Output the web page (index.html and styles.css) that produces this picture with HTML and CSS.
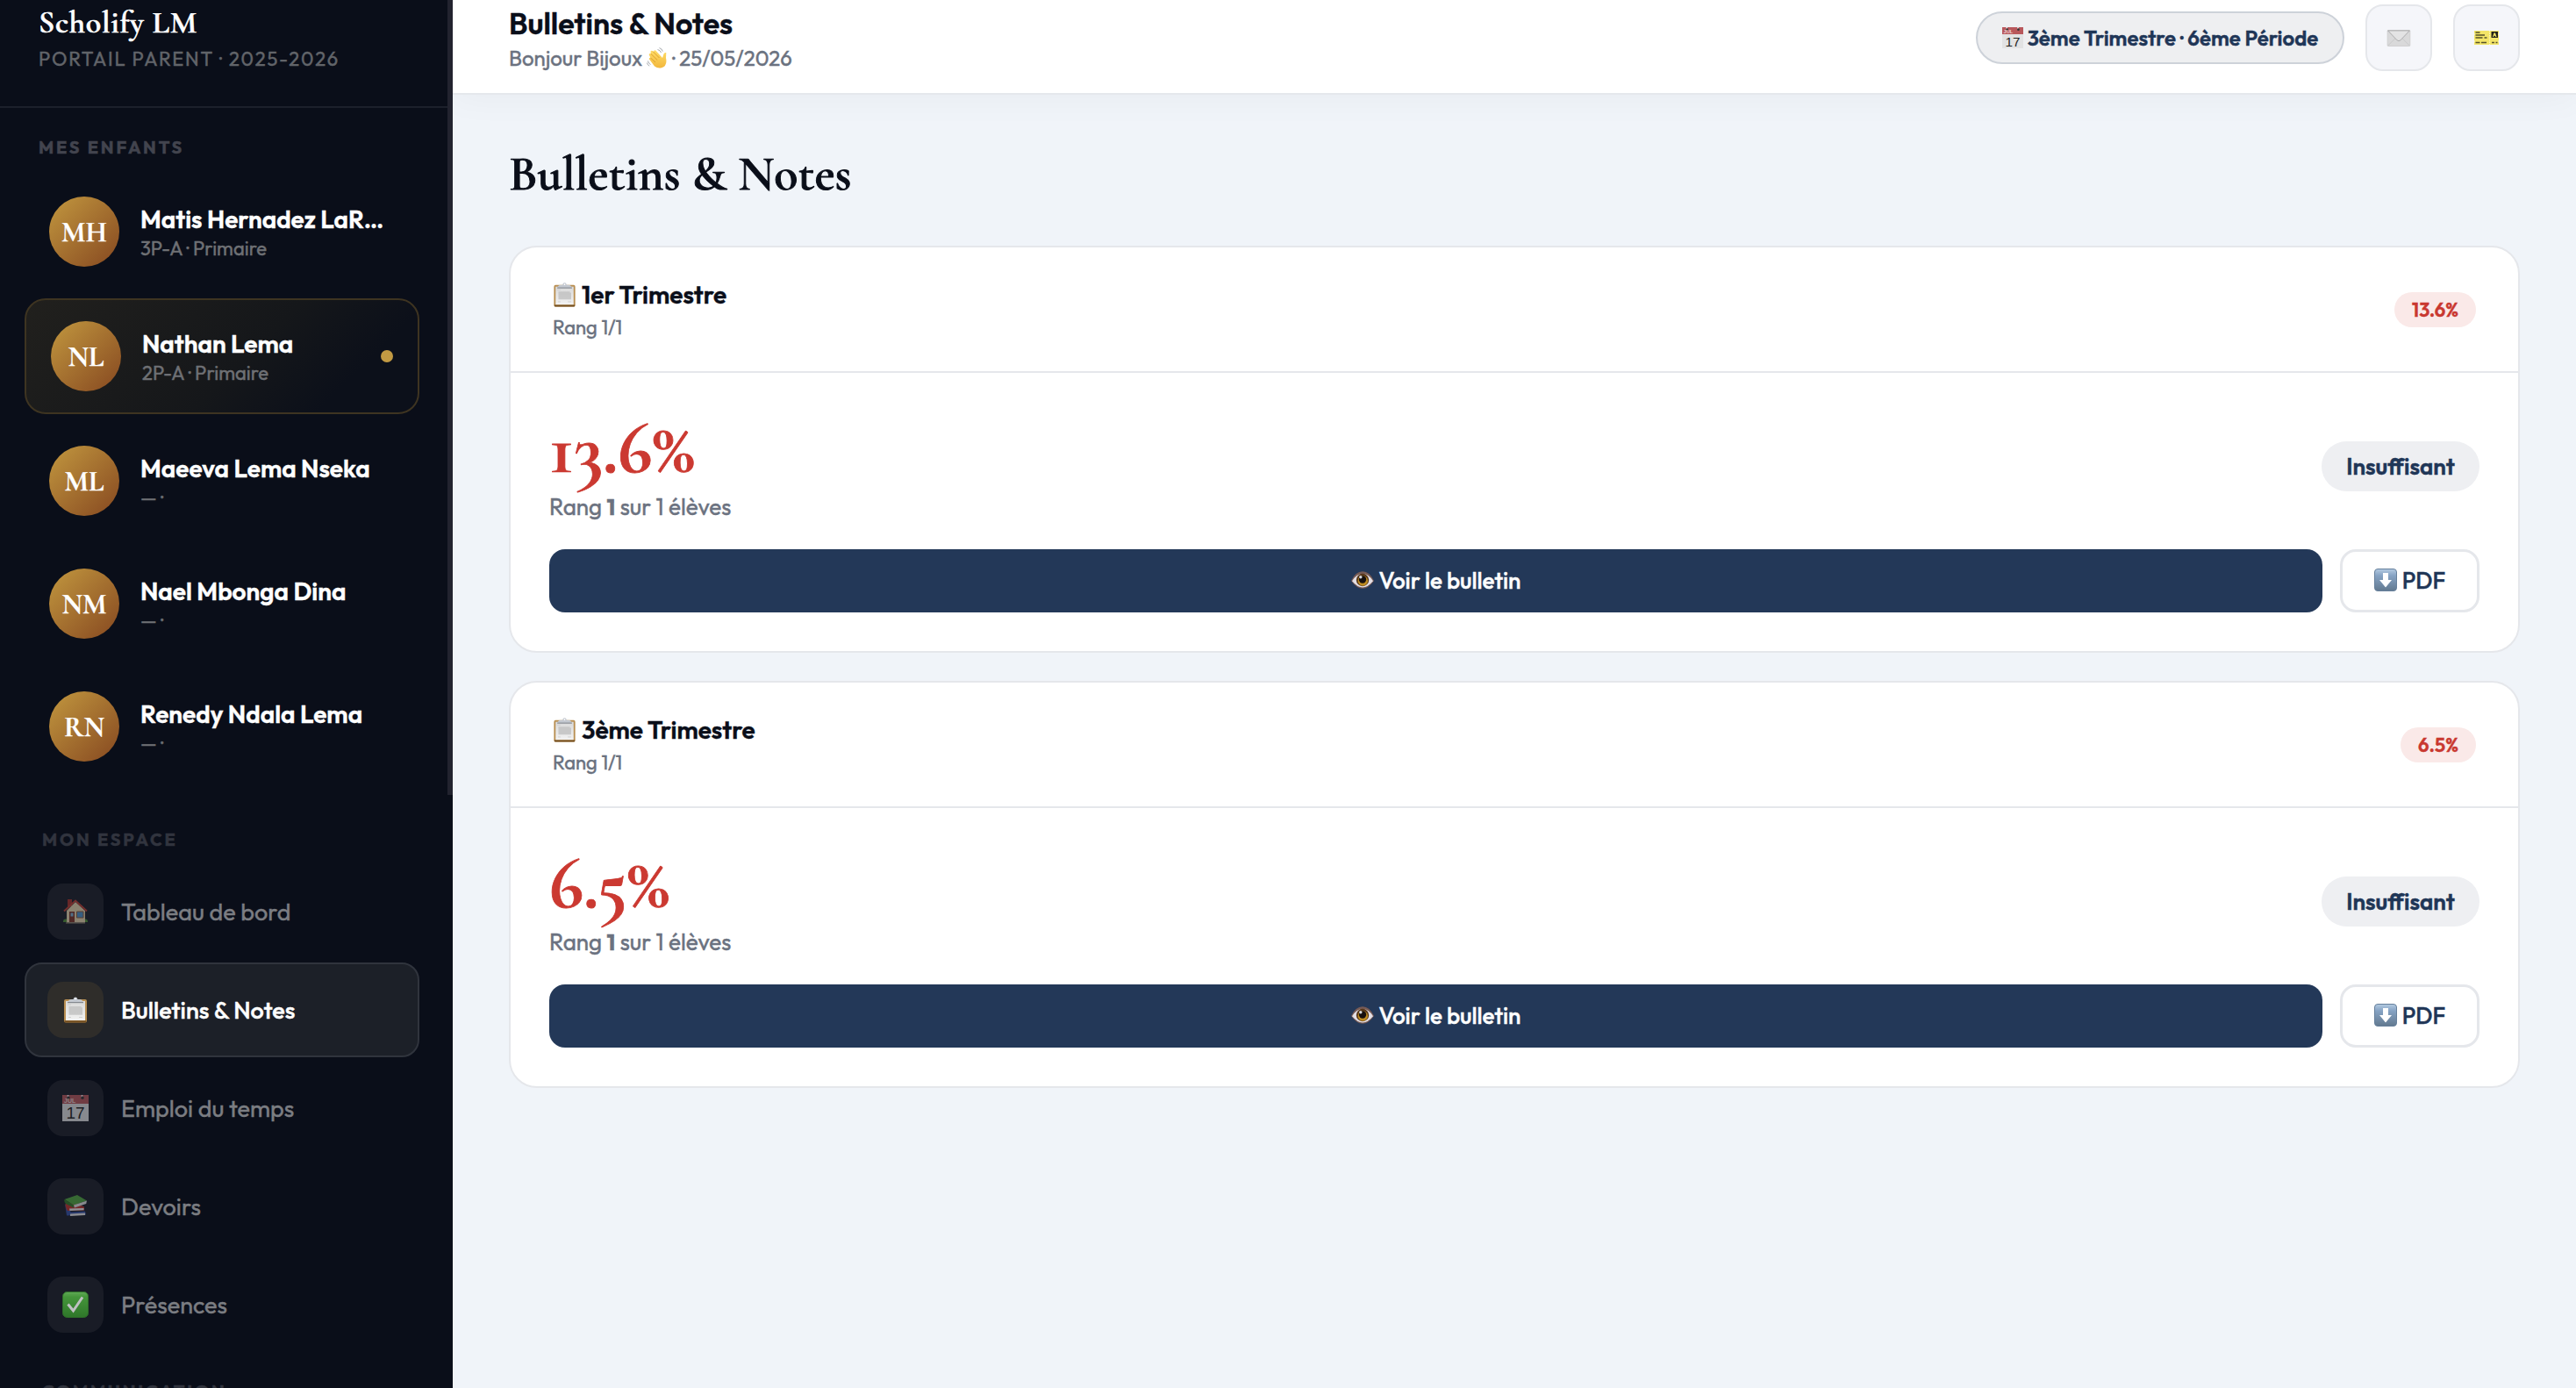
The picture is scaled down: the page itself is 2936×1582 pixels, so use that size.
FILE: index.html
```html
<!DOCTYPE html>
<html lang="fr">
<head>
    <meta charset="UTF-8">
    <meta name="viewport" content="width=device-width, initial-scale=1.0">
    <title>Scholify LM - Portail Parent</title>
    <link rel="stylesheet" href="styles.css">
</head>
<body>
    <!-- Icons -->
    <svg class="sprite" width="0" height="0">
        <defs>
            <linearGradient id="gPaper" x1="0" y1="0" x2="0" y2="1"><stop offset="0" stop-color="#d9d9d9"/><stop offset="1" stop-color="#f2f2f2"/></linearGradient>
            <linearGradient id="gGreen" x1="0" y1="0" x2="0" y2="1"><stop offset="0" stop-color="#7be069"/><stop offset=".2" stop-color="#56c443"/><stop offset="1" stop-color="#379a2c"/></linearGradient>
            <linearGradient id="gBlue" x1="0" y1="0" x2="0" y2="1"><stop offset="0" stop-color="#b4cbe2"/><stop offset=".3" stop-color="#86a3c4"/><stop offset="1" stop-color="#62798f"/></linearGradient>
            <linearGradient id="gHand" x1="0" y1="0" x2="0" y2="1"><stop offset="0" stop-color="#ffdd67"/><stop offset="1" stop-color="#f2b73c"/></linearGradient>
        </defs>
        <symbol id="i-clipboard" viewBox="0 0 28 30">
            <rect x="1" y="3" width="26" height="26.5" rx="2" fill="#b98f52"/>
            <path d="M1.5 27.2h25v1.3q0 1-1.2 1H2.7q-1.2 0-1.2-1z" fill="#755022"/>
            <path d="M3 5h22v22H3z" fill="url(#gPaper)"/>
            <path d="M6.5 11h14v1.2h1.5v8.5h-15.5z" fill="#bdbdbd" opacity=".75"/>
            <path d="M5 9h4M6 23.5h3M18 23.5h4" stroke="#c9c9c9" stroke-width=".8"/>
            <path d="M5.5 6.4Q6 3 9.5 3h2Q11.8.4 14 .4T16.5 3h2Q22 3 22.5 6.4z" fill="#c3c8d0"/>
            <path d="M5 6.6h18" stroke="#858990" stroke-width="1.2"/>
            <circle cx="14" cy="2.3" r=".9" fill="#fff"/>
        </symbol>
        <symbol id="i-calendar" viewBox="0 0 30 30">
            <path d="M0 9h30v21H0z" fill="#e2e2e3"/>
            <path d="M0 0h30v10H0z" fill="#b8575b"/>
            <path d="M6.5 3v-3M22.5 3v-3" stroke="#fff" stroke-width="1.6"/>
            <circle cx="7" cy="3.3" r="1.7" fill="#333"/>
            <circle cx="23" cy="3.3" r="1.7" fill="#333"/>
            <text x="2" y="9" class="cal-month">JUL</text>
            <text x="15" y="27" text-anchor="middle" class="cal-day">17</text>
        </symbol>
        <symbol id="i-house" viewBox="0 0 30 30">
            <path d="M1 26q0-3 3-2.5h22q3-.5 3 2.5v1H1z" fill="#4f8d36"/>
            <path d="M6 1h5v8H6z" fill="#a5312a"/>
            <path d="M5 14 15 4l11 10v13.5H5z" fill="#e8d6ae"/>
            <path d="M2 14.5 15 2.5l13 12" fill="none" stroke="#bf4034" stroke-width="2"/>
            <path d="M8 15h6v12H8z" fill="#7e3426"/>
            <path d="M9.5 16.5h3v4h-3z" fill="#7eb4d8"/>
            <path d="M16.5 15h7.5v7h-7.5z" fill="#4e93cc" stroke="#8e5f3e"/>
            <path d="M4 28h22" stroke="#9b8c75"/>
        </symbol>
        <symbol id="i-books" viewBox="0 0 30 30">
            <path d="M3 12 5 25.5 27 24.5l-1-4-16 1z" fill="#334fa6"/>
            <path d="m9 23.5 17-1v2.5L9 26z" fill="#e9e9e9"/>
            <path d="M4 11q-1.5 4 2 9l19-.5v-4l-10-4z" fill="#c0332b"/>
            <path d="m8 17.5 16.5-.5v2.2L8.5 20z" fill="#f1f1f1"/>
            <path d="M2.5 7 17 2l11 6.500-15 5z" fill="#50a83f"/>
            <path d="M2.500 7q-.8 3 1.500 5l9 4.500v-3z" fill="#317928"/>
            <path d="M13 13.500 28 8.500l-.8 3.500L14 16.500z" fill="#e4e4e4"/>
        </symbol>
        <symbol id="i-check" viewBox="0 0 30 30">
            <rect x=".5" y=".5" width="29" height="29" rx="5" fill="url(#gGreen)" stroke="#368c2a"/>
            <path d="m6.5 14.5 6 7.5L23 6.5" fill="none" stroke="#fff" stroke-width="3"/>
        </symbol>
        <symbol id="i-wave" viewBox="0 0 24 24">
            <path d="M9 21.5 3 13.5q-.4-2 1.5-1.700L2.700 8.500q.2-1.900 2.100-1.200L4.500 4.500q1-1.600 2.500-.2L8 5q.3-2.500 2.300-1.400L18 12l1.500-4.500q.6-2 2.800-1.500l-.3 6q2 9-5 11.300-4.500 1-8-1.800z" fill="url(#gHand)"/>
            <path d="m4.500 12 5.500 5M4.800 7.300l7.400 7.200M7 4.500l7.500 7.500" stroke="#d99a2b" stroke-width=".9" fill="none"/>
            <path d="M12.500 2.500q3 .5 4 3.500M14.500.6q3 .8 3.800 4M1.500 15.500q.5 3 3 4M.4 17.500q.6 2.800 2.800 3.700" stroke="#a5a9ae" stroke-width="1" fill="none"/>
        </symbol>
        <symbol id="i-mail" viewBox="0 0 28 20">
            <rect x=".5" y=".5" width="27" height="19" rx="1" fill="#d9d9da" stroke="#cfcfd0"/>
            <path d="m1 19 9.5-9.5M27 19l-9.500-9.500" stroke="#c8c8c9" fill="none"/>
            <path d="m1 1 11 11.500q2 1.700 4 0L27 1z" fill="#e3e3e4" stroke="#a9a9aa"/>
        </symbol>
        <symbol id="i-ticket" viewBox="0 0 28 16">
            <path d="M0 0h28v3l-.8 1 .8 1v6l-.8 1 .8 1v3H0v-3l.8-1-.8-1V5l.8-1-.8-1z" fill="#f3e568"/>
            <path d="M1.500 2h5M1.500 5h10.500M1.500 8h8M11.500 8h3M1.500 13.500h5M8 13.500h6M20 13.500h3M24.500 13.500h2" stroke="#55512a" stroke-width="1.500"/>
            <path d="M17.500 0v16" stroke="#fff8b8" stroke-dasharray="1.500 1"/>
            <path d="M19.500 1h7.500v7h-7.500z" fill="#22211a"/>
            <path d="m21 7 1.500-4.500h1.500L25.500 7h-1.200l-.4-1.200h-1.400L22.200 7z" fill="#f3e568"/>
        </symbol>
        <symbol id="i-eye" viewBox="0 0 26 20">
            <path d="M0 11Q5 .3 13 .3T26 11Q20 19.700 13 19.700T0 11z" fill="#765a55"/>
            <path d="M1 11.300Q6 3 13 3t12 8.300Q19 18.500 13 18.500T1 11.300z" fill="#e3dfe5"/>
            <circle cx="13" cy="10" r="7.2" fill="#57371a"/>
            <circle cx="13.3" cy="11" r="5.7" fill="#bd8b22"/>
            <circle cx="13" cy="9.5" r="4.2" fill="#17100e"/>
            <circle cx="10.8" cy="6.8" r="1.7" fill="#d5d9e0"/>
        </symbol>
        <symbol id="i-down" viewBox="0 0 26 26">
            <rect x=".5" y=".5" width="25" height="25" rx="3.5" fill="url(#gBlue)" stroke="#66809c"/>
            <path d="M10 5h6v8h4l-7 8.5L6 13h4z" fill="#fff"/>
        </symbol>
    </svg>

    <aside class="sidebar">
        <div class="brand">
            <div class="brand-name">Scholify LM</div>
            <div class="brand-sub">PORTAIL PARENT · 2025-2026</div>
        </div>

        <div class="children">
            <div class="children-label">MES ENFANTS</div>
            <div class="child">
                <div class="avatar">MH</div>
                <div class="child-info">
                    <div class="child-name">Matis Hernadez LaR…</div>
                    <div class="child-class">3P-A · Primaire</div>
                </div>
            </div>
            <div class="child active">
                <div class="avatar">NL</div>
                <div class="child-info">
                    <div class="child-name">Nathan Lema</div>
                    <div class="child-class">2P-A · Primaire</div>
                </div>
                <span class="dot"></span>
            </div>
            <div class="child">
                <div class="avatar">ML</div>
                <div class="child-info">
                    <div class="child-name">Maeeva Lema Nseka</div>
                    <div class="child-class">— ·</div>
                </div>
            </div>
            <div class="child">
                <div class="avatar">NM</div>
                <div class="child-info">
                    <div class="child-name">Nael Mbonga Dina</div>
                    <div class="child-class">— ·</div>
                </div>
            </div>
            <div class="child">
                <div class="avatar">RN</div>
                <div class="child-info">
                    <div class="child-name">Renedy Ndala Lema</div>
                    <div class="child-class">— ·</div>
                </div>
            </div>
        </div>

        <nav class="nav">
            <div class="nav-label">MON ESPACE</div>
            <a class="nav-item"><span class="nav-icon"><svg><use href="#i-house"/></svg></span>Tableau de bord</a>
            <a class="nav-item active"><span class="nav-icon"><svg><use href="#i-clipboard"/></svg></span>Bulletins &amp; Notes</a>
            <a class="nav-item"><span class="nav-icon"><svg><use href="#i-calendar"/></svg></span>Emploi du temps</a>
            <a class="nav-item"><span class="nav-icon"><svg><use href="#i-books"/></svg></span>Devoirs</a>
            <a class="nav-item"><span class="nav-icon check"><svg><use href="#i-check"/></svg></span>Présences</a>
            <div class="nav-label">COMMUNICATION</div>
        </nav>
        <div class="scroll-thumb"></div>
    </aside>

    <div class="main">
        <header class="topbar">
            <div>
                <div class="topbar-title">Bulletins &amp; Notes</div>
                <div class="topbar-sub">Bonjour Bijoux<svg><use href="#i-wave"/></svg>· 25/05/2026</div>
            </div>
            <div class="topbar-right">
                <div class="period"><svg><use href="#i-calendar"/></svg>3ème Trimestre · 6ème Période</div>
                <button class="icon-btn"><svg class="mail"><use href="#i-mail"/></svg></button>
                <button class="icon-btn"><svg class="ticket"><use href="#i-ticket"/></svg></button>
            </div>
        </header>

        <main class="content">
            <h1>Bulletins &amp; Notes</h1>

            <section class="card">
                <div class="card-header">
                    <div>
                        <div class="card-title"><svg><use href="#i-clipboard"/></svg>1er Trimestre</div>
                        <div class="card-sub">Rang 1/1</div>
                    </div>
                    <span class="badge">13.6%</span>
                </div>
                <div class="card-body">
                    <div class="result">
                        <div>
                            <div class="score">13.6%</div>
                            <div class="rank">Rang <b>1</b> sur 1 élèves</div>
                        </div>
                        <span class="mention">Insuffisant</span>
                    </div>
                    <div class="actions">
                        <button class="btn-view"><svg><use href="#i-eye"/></svg>Voir le bulletin</button>
                        <button class="btn-pdf"><svg><use href="#i-down"/></svg>PDF</button>
                    </div>
                </div>
            </section>

            <section class="card">
                <div class="card-header">
                    <div>
                        <div class="card-title"><svg><use href="#i-clipboard"/></svg>3ème Trimestre</div>
                        <div class="card-sub">Rang 1/1</div>
                    </div>
                    <span class="badge">6.5%</span>
                </div>
                <div class="card-body">
                    <div class="result">
                        <div>
                            <div class="score">6.5%</div>
                            <div class="rank">Rang <b>1</b> sur 1 élèves</div>
                        </div>
                        <span class="mention">Insuffisant</span>
                    </div>
                    <div class="actions">
                        <button class="btn-view"><svg><use href="#i-eye"/></svg>Voir le bulletin</button>
                        <button class="btn-pdf"><svg><use href="#i-down"/></svg>PDF</button>
                    </div>
                </div>
            </section>
        </main>
    </div>
</body>
</html>
```
FILE: styles.css
```css
* {
    box-sizing: border-box;
    margin: 0;
    padding: 0;
}
body {
    font-family: Outfit, Lato, sans-serif;
    display: flex;
    height: 100vh;
    overflow: hidden;
    background: #f0f4f9;
    color: #0a0e19;
    -webkit-text-stroke: .4px;
}
.sprite {
    position: absolute;
}
.cal-month {
    font: bold 7px "Liberation Sans", sans-serif;
    fill: #eed6d6;
}
.cal-day {
    font: 19px "Liberation Sans", sans-serif;
    fill: #222;
}

/* Sidebar */
.sidebar {
    position: relative;
    width: 516px;
    flex-shrink: 0;
    height: 100vh;
    overflow: hidden;
    background: #0a0e19;
}
.scroll-thumb {
    position: absolute;
    top: 0;
    right: 0;
    width: 6px;
    height: 906px;
    background: #22232f;
}
.brand {
    height: 123px;
    padding: 4px 44px 0;
    border-bottom: 2px solid #1c202b;
}
.brand-name {
    font: 600 36px/44px "Cormorant Garamond", "Liberation Serif", serif;
    letter-spacing: .02em;
    color: #fff;
    -webkit-text-stroke: .7px;
}
.brand-sub {
    margin-top: 5px;
    font-size: 22px;
    line-height: 28px;
    letter-spacing: .08em;
    color: #616469;
    white-space: nowrap;
}
.children {
    padding: 33px 38px 0 28px;
}
.children-label, .nav-label {
    font-size: 20px;
    line-height: 24px;
    font-weight: 700;
    letter-spacing: .14em;
}
.children-label {
    padding-left: 16px;
    margin-bottom: 20px;
    color: #42444e;
}
.child {
    display: flex;
    align-items: center;
    padding: 24px 28px;
    margin-bottom: 12px;
    border-radius: 24px;
}
.child.active {
    border: 2px solid #3e3421;
    background: linear-gradient(135deg, #21201d, #15171a 55%, #0c101a 80%);
}
.avatar {
    width: 80px;
    height: 80px;
    flex-shrink: 0;
    border-radius: 50%;
    background: linear-gradient(135deg, #c2983f, #864820);
    display: flex;
    align-items: center;
    justify-content: center;
    font: bold 32px "Cormorant Garamond", "Liberation Serif", serif;
    color: #fff;
}
.child-info {
    flex: 1;
    margin-left: 24px;
    padding-top: 1px;
    white-space: nowrap;
}
.child-name {
    font-size: 28px;
    line-height: 34px;
    font-weight: 600;
    color: #fff;
}
.child-class {
    margin-top: 2px;
    font-size: 22px;
    line-height: 28px;
    color: #6e7074;
}
.dot {
    width: 14px;
    height: 14px;
    border-radius: 50%;
    background: #c29a43;
}
.nav {
    padding: 0 38px 0 28px;
}
.nav-label {
    padding-left: 20px;
    margin: 33px 0 17px;
    color: #31343e;
}
.nav-label:first-child {
    margin-top: 53px;
    margin-bottom: 16px;
}
.nav-item {
    display: flex;
    align-items: center;
    gap: 20px;
    padding: 20px 24px;
    margin-bottom: 4px;
    border: 2px solid transparent;
    border-radius: 20px;
    font-size: 27px;
    color: #7b7d82;
}
.nav-icon {
    width: 64px;
    height: 64px;
    border-radius: 18px;
    background: #191c26;
    display: flex;
    align-items: center;
    justify-content: center;
}
.nav-icon svg {
    width: 30px;
    height: 30px;
    opacity: .55;
}
.nav-icon.check svg {
    opacity: .72;
}
.nav-item.active {
    border-color: #30343d;
    background: #1c2028;
    color: #fff;
    font-weight: 500;
}
.nav-item.active .nav-icon {
    background: #2f2d2a;
}
.nav-item.active svg {
    width: 28px;
    opacity: 1;
}

/* Top bar */
.main {
    flex: 1;
}
.topbar {
    display: flex;
    align-items: center;
    justify-content: space-between;
    height: 108px;
    padding: 0 64px 20px;
    background: #fff;
    border-bottom: 2px solid #e5e8ec;
    box-shadow: 0 4px 40px rgba(10, 14, 25, .04);
}
.topbar-title {
    font-size: 34px;
    line-height: 40px;
    font-weight: 600;
}
.topbar-sub {
    display: flex;
    align-items: center;
    margin-top: 5px;
    font-size: 24px;
    line-height: 28px;
    color: #6b7280;
}
.topbar-sub svg {
    width: 24px;
    height: 24px;
    margin: 0 5px;
}
.topbar-right {
    display: flex;
    align-items: center;
    gap: 24px;
}
.period {
    display: flex;
    align-items: center;
    justify-content: center;
    gap: 5px;
    width: 420px;
    height: 60px;
    border: 2px solid #cdd2d9;
    border-radius: 30px;
    background: #eeeff1;
    font-size: 24px;
    font-weight: 600;
    white-space: nowrap;
    color: #1f3657;
}
.period svg {
    width: 24px;
    height: 24px;
}
.icon-btn {
    display: flex;
    align-items: center;
    justify-content: center;
    width: 76px;
    height: 76px;
    border: 2px solid #e5e7eb;
    border-radius: 20px;
    background: #f5f6fa;
}
.mail {
    width: 28px;
    height: 19px;
}
.ticket {
    width: 28px;
    height: 16px;
}

/* Content */
.content {
    padding: 57px 64px;
}
h1 {
    font: 600 56px/66px "Cormorant Garamond", "Liberation Serif", serif;
    margin-bottom: 49px;
    -webkit-text-stroke: 1px;
}
.card {
    height: 464px;
    margin-bottom: 32px;
    border: 2px solid #e5e7eb;
    border-radius: 32px;
    background: #fff;
}
.card-header {
    display: flex;
    align-items: center;
    justify-content: space-between;
    height: 143px;
    padding: 0 48px;
    border-bottom: 2px solid #e5e7eb;
}
.card-title {
    display: flex;
    align-items: center;
    gap: 6px;
    font-size: 28px;
    line-height: 36px;
    font-weight: 600;
}
.card-title svg {
    width: 27px;
    height: 28px;
}
.card-sub {
    margin-top: 5px;
    font-size: 22px;
    line-height: 28px;
    color: #6b7280;
}
.badge {
    height: 40px;
    padding: 0 20px;
    border-radius: 20px;
    background: #fae9e8;
    font-size: 22px;
    line-height: 40px;
    font-weight: 600;
    color: #c93830;
}
.card-body {
    padding: 44px;
}
.result {
    display: flex;
    align-items: center;
    justify-content: space-between;
    height: 125px;
    margin-bottom: 32px;
}
.score {
    margin-bottom: 10px;
    font: bold 84px/82px "Cormorant Garamond", "Liberation Serif", serif;
    color: #cb3931;
    -webkit-text-stroke: .8px;
}
.rank {
    font-size: 26px;
    line-height: 32px;
    color: #6b7280;
}
.mention {
    width: 180px;
    height: 57px;
    border-radius: 29px;
    background: #eeeff2;
    text-align: center;
    font-size: 26px;
    line-height: 57px;
    font-weight: 600;
    color: #1f3657;
}
.actions {
    display: flex;
    gap: 20px;
}
.btn-view, .btn-pdf {
    display: flex;
    align-items: center;
    justify-content: center;
    gap: 6px;
    height: 72px;
    padding-bottom: 2px;
    border-radius: 18px;
    font-family: inherit;
    font-size: 26px;
    font-weight: 500;
    -webkit-text-stroke: .4px;
}
.btn-view {
    flex: 1;
    border: none;
    background: #233858;
    color: #fff;
}
.btn-view svg {
    width: 26px;
    height: 20px;
}
.btn-pdf {
    width: 159px;
    border: 3px solid #e5e7eb;
    background: #fff;
    color: #1f3657;
}
.btn-pdf svg {
    width: 26px;
    height: 26px;
}
```
